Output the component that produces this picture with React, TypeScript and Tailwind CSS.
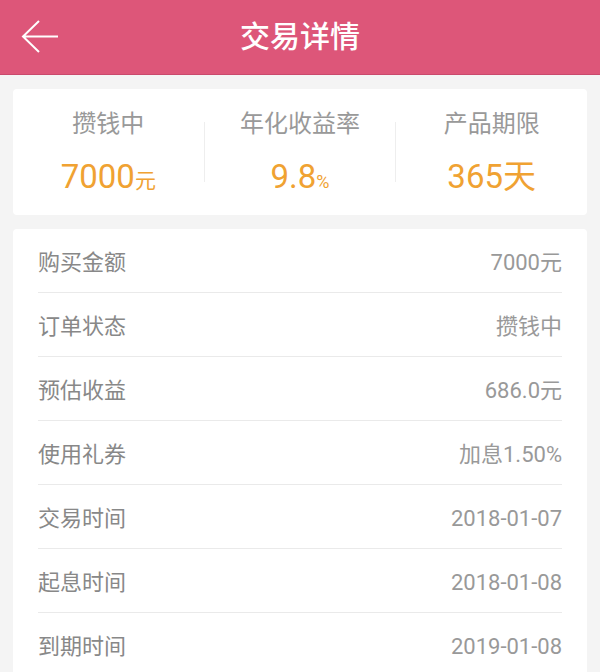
import React from "react";

const font = { fontFamily: "Roboto, 'Noto Sans CJK SC', sans-serif" };

const rows = [
  ["购买金额", "7000元"],
  ["订单状态", "攒钱中"],
  ["预估收益", "686.0元"],
  ["使用礼券", "加息1.50%"],
  ["交易时间", "2018-01-07"],
  ["起息时间", "2018-01-08"],
  ["到期时间", "2019-01-08"],
];

export default function App() {
  return (
    <div className="w-[600px] h-[672px] overflow-hidden bg-[#f4f4f4]" style={font}>
      <div className="relative h-[75px] bg-[#dd5679] border-b border-[#c9496c] flex items-center justify-center">
        <svg
          className="absolute left-[21px] top-[19px]"
          width="38"
          height="36"
          viewBox="0 0 38 36"
          fill="none"
          stroke="#fff"
          strokeWidth="2"
        >
          <path d="M37 17.5H3M18 2L2 17.5L18 33" />
        </svg>
        <span className="text-white text-[30px] font-medium leading-none">交易详情</span>
      </div>

      <div className="mx-[13px] mt-[14px] h-[126px] bg-white rounded-[4px] flex items-center">
        <div className="flex-1 flex flex-col items-center">
          <span className="text-[24px] text-[#999] leading-none">攒钱中</span>
          <span className="text-[#f0a232] mt-[24px] leading-none">
            <span className="text-[33px]">7000</span>
            <span className="text-[21px]">元</span>
          </span>
        </div>
        <div className="w-px h-[60px] bg-[#eee]" />
        <div className="flex-1 flex flex-col items-center">
          <span className="text-[24px] text-[#999] leading-none">年化收益率</span>
          <span className="text-[#f0a232] mt-[24px] leading-none">
            <span className="text-[33px]">9.8</span>
            <span className="text-[18px]">%</span>
          </span>
        </div>
        <div className="w-px h-[60px] bg-[#eee]" />
        <div className="flex-1 flex flex-col items-center">
          <span className="text-[24px] text-[#999] leading-none">产品期限</span>
          <span className="text-[#f0a232] mt-[24px] leading-none">
            <span className="text-[33px]">365天</span>
          </span>
        </div>
      </div>

      <div className="mx-[13px] mt-[14px] bg-white rounded-t-[4px] px-[25px] pb-[40px]">
        {rows.map(([k, v]) => (
          <div
            key={k}
            className="h-[64px] pt-[3px] border-b border-[#eaeaea] flex items-center justify-between"
          >
            <span className="text-[22px] text-[#888]">{k}</span>
            <span className="text-[22px] text-[#999]">{v}</span>
          </div>
        ))}
      </div>
    </div>
  );
}
